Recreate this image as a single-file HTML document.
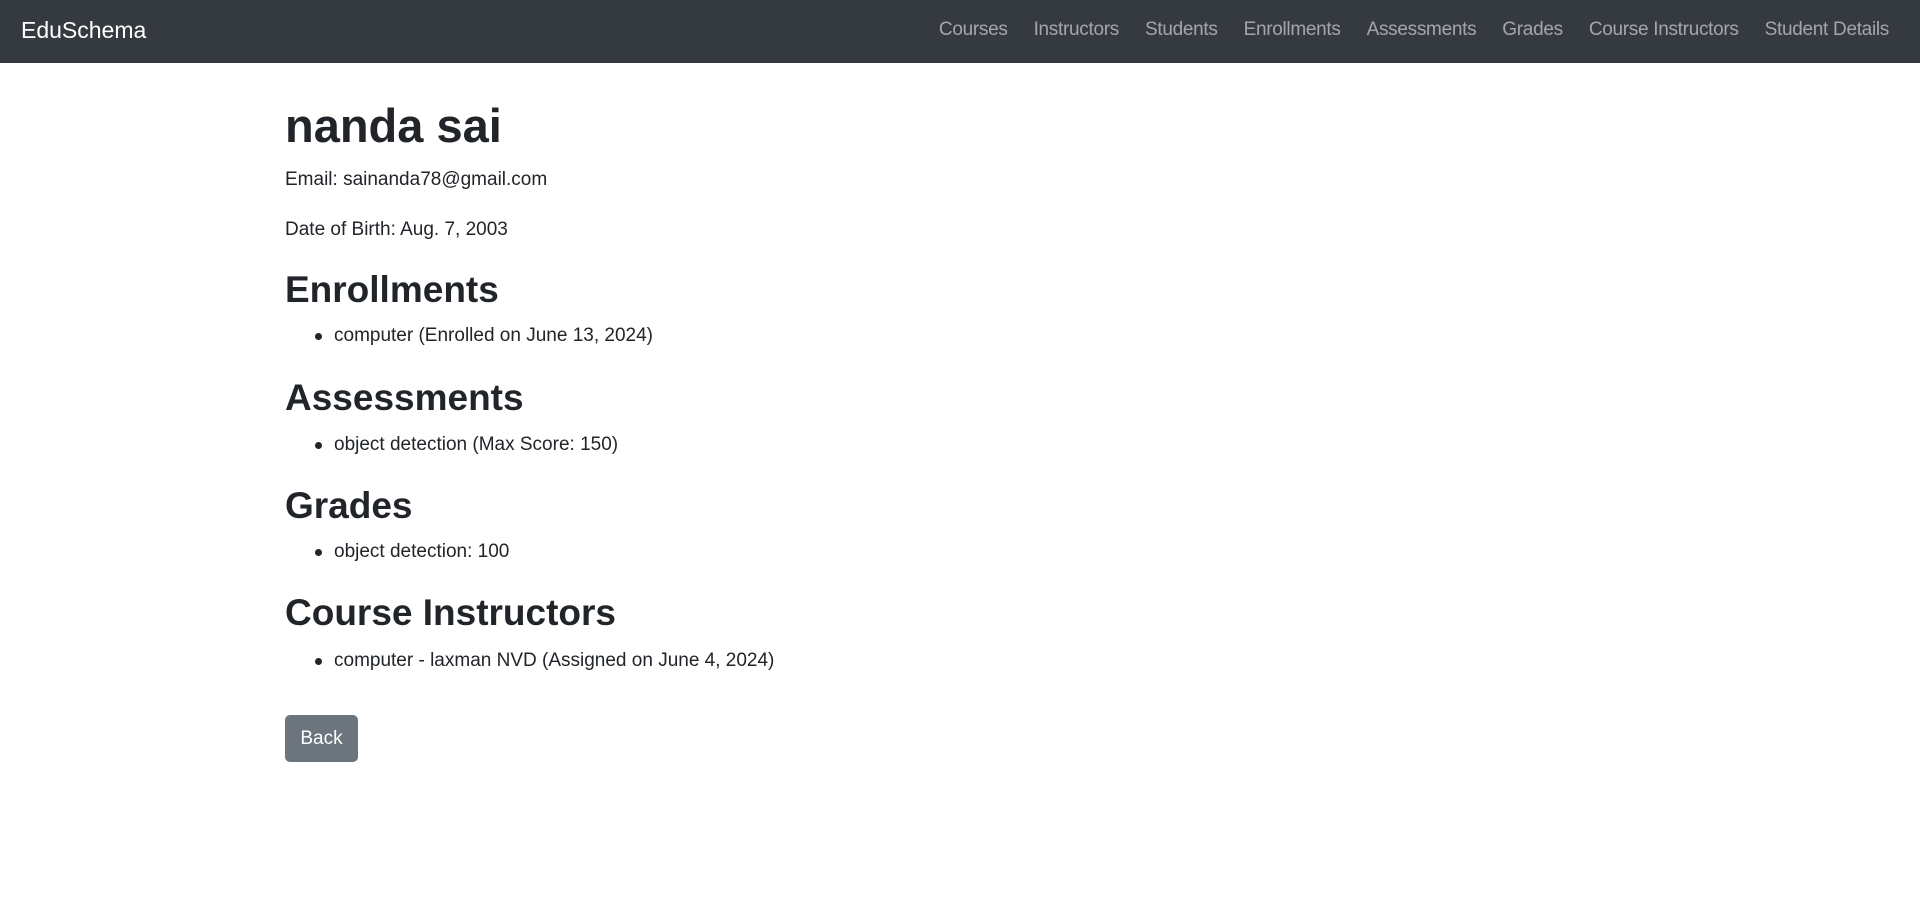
<!DOCTYPE html>
<html><head><meta charset="utf-8"><style>
*{margin:0;padding:0;box-sizing:border-box}
body{width:1920px;height:904px;background:#fff;font-family:"Liberation Sans",sans-serif;color:#212529;position:relative;overflow:hidden}
nav{position:absolute;left:0;top:0;width:1920px;height:63px;background:#343a40}
.brand{position:absolute;left:21px;top:0;line-height:60px;font-size:23px;color:#fff}
.links{position:absolute;right:31px;top:0;line-height:60px;font-size:19px;color:rgba(255,255,255,.55);display:flex;gap:26px;letter-spacing:-0.3px}
.a{position:absolute;left:285px;white-space:nowrap}
h1{font-size:47px;font-weight:bold;line-height:60px}
h2{font-size:37px;font-weight:bold;line-height:46px}
.p{font-size:19px;line-height:28px}
.li{left:334px;font-size:19px;line-height:28px}
.li:before{content:"";position:absolute;left:-19px;top:11px;width:7px;height:7px;border-radius:50%;background:#212529}
.btn{position:absolute;left:285px;top:715px;width:73px;height:47px;background:#6c757d;border-radius:5px;color:#fff;font-size:19px;line-height:47px;text-align:center}
</style></head><body>
<nav><div class="brand">EduSchema</div>
<div class="links"><span>Courses</span><span>Instructors</span><span>Students</span><span>Enrollments</span><span>Assessments</span><span>Grades</span><span>Course Instructors</span><span>Student Details</span></div></nav>
<h1 class="a" style="top:96px">nanda sai</h1>
<div class="a p" style="top:166px">Email: sainanda78@gmail.com</div>
<div class="a p" style="top:216px">Date of Birth: Aug. 7, 2003</div>
<h2 class="a" style="top:267px">Enrollments</h2>
<div class="a li" style="top:322px">computer (Enrolled on June 13, 2024)</div>
<h2 class="a" style="top:375px">Assessments</h2>
<div class="a li" style="top:431px">object detection (Max Score: 150)</div>
<h2 class="a" style="top:483px">Grades</h2>
<div class="a li" style="top:538px">object detection: 100</div>
<h2 class="a" style="top:590px">Course Instructors</h2>
<div class="a li" style="top:647px">computer - laxman NVD (Assigned on June 4, 2024)</div>
<div class="btn">Back</div>
</body></html>
